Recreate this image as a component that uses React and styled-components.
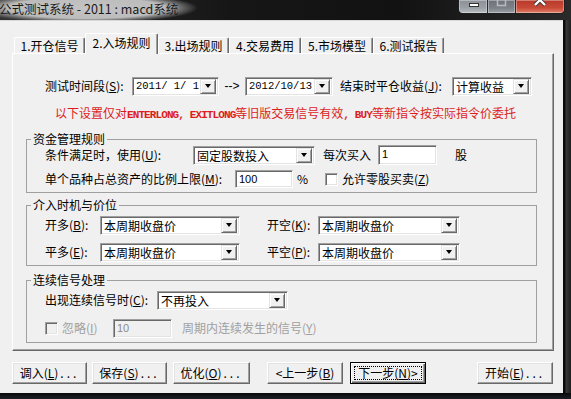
import React from "react";
import styled, { createGlobalStyle, css } from "styled-components";

const GlobalStyle = createGlobalStyle`
  html, body { margin: 0; padding: 0; background: #141414; }
  body {
    font-family: "Noto Sans CJK SC", "Liberation Sans", sans-serif;
    font-size: 12px;
    color: #000;
  }
`;

const sunken = css`
  box-sizing: border-box;
  border-style: solid;
  border-width: 1px;
  border-color: #a0a0a0 #fff #fff #a0a0a0;
  box-shadow: inset 1px 1px 0 #696969, inset -1px -1px 0 #e3e3e3;
`;

const Window = styled.div`
  width: 571px;
  height: 399px;
  display: flex;
  flex-direction: column;
  background: #141414;
  overflow: hidden;
`;

const TitleBar = styled.div`
  height: 20px;
  flex-shrink: 0;
  display: flex;
  justify-content: space-between;
  align-items: flex-start;
  background:
    radial-gradient(ellipse 112px 15px at 86px 8px, #c4c4c4 0%, #bcbcbc 70%, rgba(150,150,150,0.6) 86%, rgba(40,40,40,0) 100%),
    linear-gradient(90deg, #333 0%, #161616 40%, #121212 70%, #2a2a2a 100%);
`;

const Title = styled.span`
  margin-left: -1px;
  font-size: 12.5px;
  line-height: 17px;
  color: #1a1a1a;
  white-space: nowrap;
`;

const Caption = styled.div`
  display: flex;
  margin-right: 6px;
  height: 13px;
  border: 1px solid #1e1e1e;
  border-top: none;
  border-radius: 0 0 5px 5px;
  overflow: hidden;
`;

const CapBtn = styled.div`
  width: ${(p) => p.$w}px;
  height: 100%;
  display: flex;
  align-items: flex-start;
  justify-content: center;
  border-left: ${(p) => (p.$first ? "none" : "1px solid #2a2a2a")};
  box-shadow: inset 0 0 0 1px rgba(255, 255, 255, 0.35);
  background: ${(p) =>
    p.$kind === "close"
      ? "linear-gradient(#b8382a, #c84a36 60%, #e0806a)"
      : p.$kind === "max"
      ? "linear-gradient(#6d7278, #7c8187 60%, #9aa0a6)"
      : "linear-gradient(#8a9096, #9aa0a5 60%, #b8bdc2)"};
`;

const Middle = styled.div`
  flex: 1;
  display: flex;
  min-height: 0;
`;

const Client = styled.div`
  width: 563px;
  flex-shrink: 0;
  background: #f0f0f0;
  box-sizing: border-box;
  padding: 13px 0 0 12px;
  border-top: 1px solid #d8d8d8;
`;

const RightFrame = styled.div`
  flex: 1;
  background: linear-gradient(90deg, #0b0b0b 0, #0b0b0b 2px, #3a3a3a 3px, #1e1e1e 100%);
`;

const BottomFrame = styled.div`
  height: 6px;
  flex-shrink: 0;
  background: linear-gradient(#0a0a0a, #1c2026);
`;

const TabBar = styled.div`
  display: flex;
  align-items: flex-end;
  margin-left: 2px;
  margin-top: -1px;
  position: relative;
  z-index: 1;
`;

const Tab = styled.div`
  box-sizing: border-box;
  width: ${(p) => p.$w}px;
  height: ${(p) => (p.$active ? 21 : 16)}px;
  margin-bottom: ${(p) => (p.$active ? -1 : 0)}px;
  padding-bottom: ${(p) => (p.$active ? 2 : 0)}px;
  display: flex;
  align-items: center;
  justify-content: center;
  background: #f0f0f0;
  border-top: 1px solid #fff;
  border-left: 1px solid #fff;
  border-right: 1px solid #696969;
  box-shadow: inset -1px 0 0 #a0a0a0;
  border-radius: 2px 2px 0 0;
  white-space: nowrap;
  line-height: 14px;
`;

const Panel = styled.div`
  box-sizing: border-box;
  width: 542px;
  height: 298px;
  border: 1px solid;
  border-color: #fff #696969 #696969 #fff;
  box-shadow: inset -1px -1px 0 #a0a0a0;
  padding: 23px 16px 0 13px;
`;

const Row = styled.div`
  display: flex;
  align-items: center;
  height: 18px;
  margin-left: ${(p) => p.$indent || 0}px;
  margin-top: ${(p) => p.$mt || 0}px;
`;

const Label = styled.span`
  flex-shrink: 0;
  width: ${(p) => (p.$w ? `${p.$w}px` : "auto")};
  margin-left: ${(p) => p.$ml || 0}px;
  white-space: nowrap;
  line-height: 16px;
  color: ${(p) => (p.$disabled ? "#a0a0a0" : "#000")};
`;

const Key = styled.span`
  text-decoration: underline;
`;

const Arrow = styled.span`
  flex-shrink: 0;
  width: 26px;
  text-align: center;
  font-family: "Liberation Sans", sans-serif;
  font-size: 12px;
`;

const Combo = styled.div`
  ${sunken}
  flex-shrink: 0;
  width: ${(p) => p.$w}px;
  height: 19px;
  background: #fff;
  display: flex;
  align-items: stretch;
  padding: 1px 2px 1px 2px;
`;

const ComboText = styled.span`
  flex: 1;
  white-space: pre;
  line-height: 15px;
  padding-left: 1px;
  font-family: ${(p) => (p.$mono ? '"Liberation Mono", monospace' : "inherit")};
  font-size: ${(p) => (p.$mono ? "10.5px" : "12px")};
`;

const DropBtn = styled.span`
  box-sizing: border-box;
  width: 16px;
  background: #f0f0f0;
  border: 1px solid;
  border-color: #e3e3e3 #696969 #696969 #e3e3e3;
  box-shadow: inset 1px 1px 0 #fff, inset -1px -1px 0 #a0a0a0;
  display: flex;
  align-items: center;
  justify-content: center;
`;

const Tri = styled.span`
  width: 0;
  height: 0;
  border-left: 3.5px solid transparent;
  border-right: 3.5px solid transparent;
  border-top: 4px solid #000;
`;

const Edit = styled.div`
  ${sunken}
  flex-shrink: 0;
  width: ${(p) => p.$w}px;
  height: ${(p) => p.$h || 19}px;
  margin-left: ${(p) => p.$ml || 0}px;
  background: ${(p) => (p.$disabled ? "#f0f0f0" : "#fff")};
  color: ${(p) => (p.$disabled ? "#8a8a8a" : "#000")};
  font-family: "Liberation Sans", sans-serif;
  font-size: 11px;
  line-height: 14px;
  padding: 1px 3px;
`;

const Check = styled.span`
  ${sunken}
  flex-shrink: 0;
  width: 13px;
  height: 13px;
  margin-left: ${(p) => p.$ml || 0}px;
  background: ${(p) => (p.$disabled ? "#f0f0f0" : "#fff")};
`;

const Notice = styled.div`
  margin: 11px 0 0 29px;
  line-height: 14px;
  color: #dd1d1d;
  white-space: nowrap;
`;

const Latin = styled.span`
  font-family: "Liberation Mono", monospace;
  font-weight: bold;
  font-size: 11px;
  letter-spacing: -0.9px;
`;

const Group = styled.fieldset`
  margin: ${(p) => p.$mt}px 0 0 0;
  padding: ${(p) => p.$pt}px 8px ${(p) => p.$pb}px 18px;
  border: 1px solid #a0a0a0;
  min-inline-size: 0;
`;

const Legend = styled.legend`
  margin-left: -14px;
  padding: 0 2px;
  line-height: 14px;
  font-size: 12px;
`;

const ButtonRow = styled.div`
  display: flex;
  margin-top: 11px;
`;

const Button = styled.div`
  box-sizing: border-box;
  width: ${(p) => p.$w || 75}px;
  height: 22px;
  margin-left: ${(p) => p.$ml || 0}px;
  display: flex;
  align-items: center;
  justify-content: center;
  background: #f0f0f0;
  border: 1px solid;
  border-color: #fff #696969 #696969 #fff;
  box-shadow: inset -1px -1px 0 #a0a0a0, inset 1px 1px 0 #e3e3e3;
  white-space: nowrap;
  line-height: 14px;
  ${(p) =>
    p.$default &&
    css`
      border-color: #000;
      box-shadow: inset 1px 1px 0 #fff, inset -1px -1px 0 #696969, inset -2px -2px 0 #a0a0a0;
      padding: 3px;
      align-items: stretch;
    `}
`;

const FocusRect = styled.span`
  flex: 1;
  display: flex;
  align-items: center;
  justify-content: center;
  border: 1px dotted #000;
`;

const Dots = styled.span`
  letter-spacing: 3px;
  margin-left: 2px;
`;

const Dropdown = ({ w, mono, children }) => (
  <Combo $w={w}>
    <ComboText $mono={mono}>{children}</ComboText>
    <DropBtn>
      <Tri />
    </DropBtn>
  </Combo>
);

const tabs = [
  ["1.开仓信号", 71],
  ["2.入场规则", 73],
  ["3.出场规则", 71],
  ["4.交易费用", 72],
  ["5.市场模型", 72],
  ["6.测试报告", 71],
];

export default function App() {
  return (
    <Window>
      <GlobalStyle />
      <TitleBar>
        <Title>公式测试系统 - 2011 : macd系统</Title>
        <Caption>
          <CapBtn $w={28} $first $kind="min">
            <svg width="28" height="12">
              <rect x="10.5" y="3.5" width="9" height="3" fill="#fff" stroke="#333" strokeWidth="1" />
            </svg>
          </CapBtn>
          <CapBtn $w={27} $kind="max">
            <svg width="27" height="12">
              <rect x="9.5" y="-3.5" width="8" height="9" fill="none" stroke="#b8bcc0" strokeWidth="1.5" />
            </svg>
          </CapBtn>
          <CapBtn $w={48} $kind="close">
            <svg width="48" height="12">
              <path d="M19 -5 L29 5 M29 -5 L19 5" stroke="#333" strokeWidth="4" />
              <path d="M19 -5 L29 5 M29 -5 L19 5" stroke="#fff" strokeWidth="2.4" />
            </svg>
          </CapBtn>
        </Caption>
      </TitleBar>
      <Middle>
        <Client>
          <TabBar>
            {tabs.map(([t, w], i) => (
              <Tab key={t} $w={w} $active={i === 1}>
                {t}
              </Tab>
            ))}
          </TabBar>
          <Panel>
            <Row $indent={19}>
              <Label $w={87}>
                测试时间段(<Key>S</Key>):
              </Label>
              <Dropdown w={87} mono>
                2011/ 1/ 1
              </Dropdown>
              <Arrow>--&gt;</Arrow>
              <Dropdown w={88} mono>
                2012/10/13
              </Dropdown>
              <Label $ml={7} $w={112}>
                结束时平仓收益(<Key>J</Key>):
              </Label>
              <Dropdown w={80}>计算收益</Dropdown>
            </Row>
            <Notice>
              以下设置仅对<Latin>ENTERLONG, EXITLONG</Latin>等旧版交易信号有效<Latin>, BUY</Latin>
              等新指令按实际指令价委托
            </Notice>

            <Group $mt={10} $pt={0} $pb={4}>
              <Legend>资金管理规则</Legend>
              <Row>
                <Label $w={148}>
                  条件满足时，使用(<Key>U</Key>):
                </Label>
                <Dropdown w={122}>固定股数投入</Dropdown>
                <Label $ml={8} $w={55}>
                  每次买入
                </Label>
                <Edit $w={59} $h={20}>
                  1
                </Edit>
                <Label $ml={18}>股</Label>
              </Row>
              <Row $mt={6}>
                <Label $w={190}>
                  单个品种占总资产的比例上限(<Key>M</Key>):
                </Label>
                <Edit $w={58} $h={18}>
                  100
                </Edit>
                <Label $ml={4} $w={10}>
                  %
                </Label>
                <Check $ml={18} />
                <Label $ml={4}>
                  允许零股买卖(<Key>Z</Key>)
                </Label>
              </Row>
            </Group>

            <Group $mt={5} $pt={4} $pb={4}>
              <Legend>介入时机与价位</Legend>
              <Row>
                <Label $w={55}>
                  开多(<Key>B</Key>):
                </Label>
                <Dropdown w={140}>本周期收盘价</Dropdown>
                <Label $ml={27} $w={51}>
                  开空(<Key>K</Key>):
                </Label>
                <Dropdown w={142}>本周期收盘价</Dropdown>
              </Row>
              <Row $mt={9}>
                <Label $w={55}>
                  平多(<Key>E</Key>):
                </Label>
                <Dropdown w={140}>本周期收盘价</Dropdown>
                <Label $ml={27} $w={51}>
                  平空(<Key>P</Key>):
                </Label>
                <Dropdown w={142}>本周期收盘价</Dropdown>
              </Row>
            </Group>

            <Group $mt={7} $pt={4} $pb={5}>
              <Legend>连续信号处理</Legend>
              <Row>
                <Label $w={112}>
                  出现连续信号时(<Key>C</Key>):
                </Label>
                <Dropdown w={131}>不再投入</Dropdown>
              </Row>
              <Row $mt={10}>
                <Check $disabled />
                <Label $ml={4} $w={51} $disabled>
                  忽略(<Key>I</Key>)
                </Label>
                <Edit $w={59} $disabled>
                  10
                </Edit>
                <Label $ml={10} $disabled>
                  周期内连续发生的信号(<Key>Y</Key>)
                </Label>
              </Row>
            </Group>
          </Panel>

          <ButtonRow>
            <Button $w={75}>
              调入(<Key>L</Key>)<Dots>...</Dots>
            </Button>
            <Button $w={75} $ml={5}>
              保存(<Key>S</Key>)<Dots>...</Dots>
            </Button>
            <Button $w={77} $ml={6}>
              优化(<Key>O</Key>)<Dots>...</Dots>
            </Button>
            <Button $w={76} $ml={17}>
              &lt;上一步(<Key>B</Key>)
            </Button>
            <Button $w={76} $ml={7} $default>
              <FocusRect>
                下一步(<Key>N</Key>)&gt;
              </FocusRect>
            </Button>
            <Button $w={76} $ml={51}>
              开始(<Key>E</Key>)<Dots>...</Dots>
            </Button>
          </ButtonRow>
        </Client>
        <RightFrame />
      </Middle>
      <BottomFrame />
    </Window>
  );
}
